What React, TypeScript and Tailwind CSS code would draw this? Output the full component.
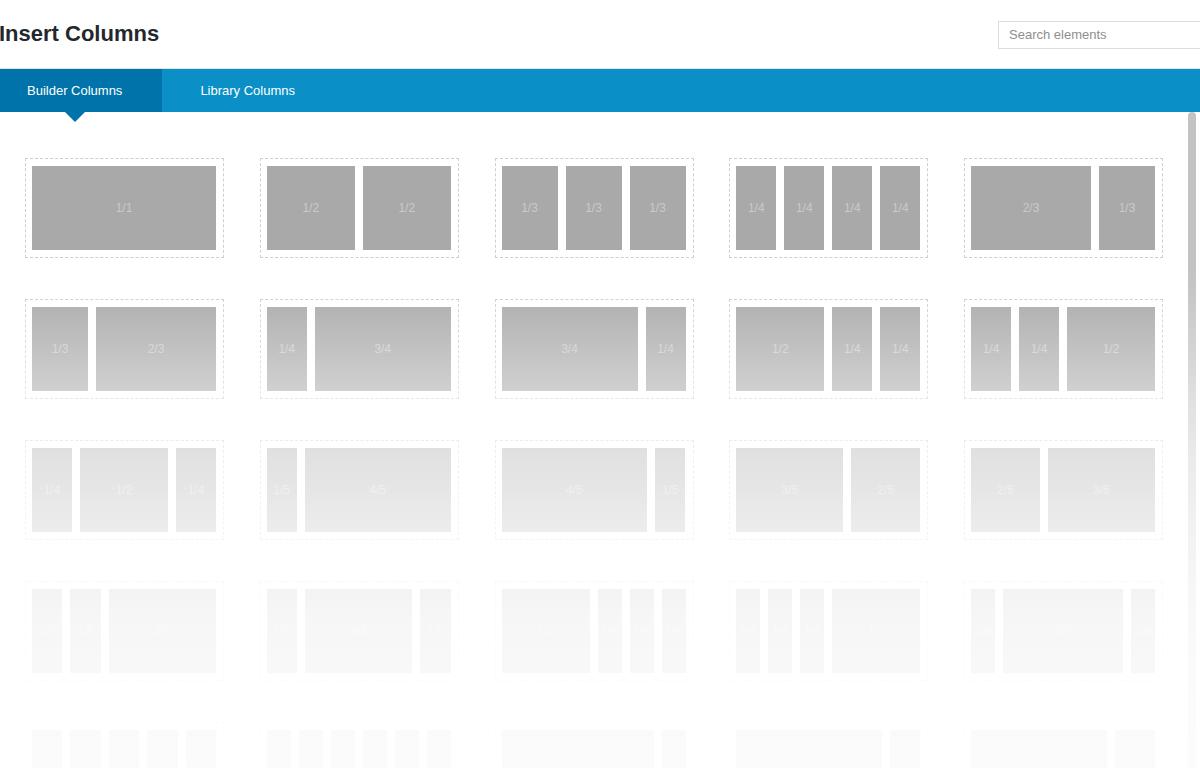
import React from "react"

type Layout = string[]

const rows: Layout[][] = [
  [["1/1"], ["1/2", "1/2"], ["1/3", "1/3", "1/3"], ["1/4", "1/4", "1/4", "1/4"], ["2/3", "1/3"]],
  [["1/3", "2/3"], ["1/4", "3/4"], ["3/4", "1/4"], ["1/2", "1/4", "1/4"], ["1/4", "1/4", "1/2"]],
  [["1/4", "1/2", "1/4"], ["1/5", "4/5"], ["4/5", "1/5"], ["3/5", "2/5"], ["2/5", "3/5"]],
  [["1/5", "1/5", "3/5"], ["1/5", "3/5", "1/5"], ["1/2", "1/6", "1/6", "1/6"], ["1/6", "1/6", "1/6", "1/2"], ["1/6", "2/3", "1/6"]],
  [["1/5", "1/5", "1/5", "1/5", "1/5"], ["1/6", "1/6", "1/6", "1/6", "1/6", "1/6"], ["5/6", "1/6"], ["4/5", "1/5"], ["3/4", "1/4"]],
]

const frac = (s: string) => {
  const [n, d] = s.split("/").map(Number)
  return n / d
}

function ColumnCard({ layout }: { layout: Layout }) {
  return (
    <div className="h-[100px] w-[199px] border border-dashed border-[#cfcfcf] py-[7px] pl-[6px] pr-[7px]">
      <div className="flex h-full mr-[-8px]">
        {layout.map((c, i) => (
          <div key={i} className="h-full pr-[8px]" style={{ width: `${frac(c) * 100}%` }}>
            <div className="flex h-full items-center justify-center bg-[#a9a9a9] text-[12px] text-[#c9c9c9]">
              {c}
            </div>
          </div>
        ))}
      </div>
    </div>
  )
}

export default function App() {
  return (
    <div
      className="relative flex h-[768px] w-full flex-col overflow-hidden bg-white"
      style={{ fontFamily: '"Liberation Sans", Arial, sans-serif' }}
    >
      <div className="flex h-[68px] shrink-0 items-center justify-between">
        <h1 className="ml-[-1px] mt-[-1px] text-[22px] font-bold text-[#23282d]">Insert Columns</h1>
        <div className="mr-[-2px] mt-[1px] flex h-[28px] w-[204px] items-center border border-[#dddddd] px-[10px] text-[13px] text-[#8e8e8e]">
          Search elements
        </div>
      </div>

      <div className="relative flex h-[44px] shrink-0 border-t border-[#e2e2e2] bg-[#0a8fc6] text-[13px] text-white">
        <div className="relative flex items-center bg-[#0073aa] pl-[27px] pr-[40px]">
          Builder Columns
          <span className="absolute left-[65px] top-full h-0 w-0 border-x-[10px] border-t-[10px] border-x-transparent border-t-[#0073aa]" />
        </div>
        <div className="flex items-center pl-[38px]">Library Columns</div>
      </div>

      <div className="flex-1 overflow-hidden pl-[25px] pt-[46px]">
        <div className="grid grid-cols-[repeat(5,199px)] gap-x-[35.75px] gap-y-[41px]">
          {rows.flat().map((layout, i) => (
            <ColumnCard key={i} layout={layout} />
          ))}
        </div>
      </div>

      <div className="absolute bottom-0 left-[1188px] top-[112px] w-[8px] rounded-t-full bg-[#c3c3c3]" />

      <div className="pointer-events-none absolute inset-x-0 bottom-0 top-[270px] bg-[linear-gradient(to_bottom,rgba(255,255,255,0)_0%,rgba(255,255,255,0.11)_7%,rgba(255,255,255,0.45)_24%,rgba(255,255,255,0.64)_36%,rgba(255,255,255,0.78)_52%,rgba(255,255,255,0.9)_70%,rgba(255,255,255,0.95)_94%)]" />
    </div>
  )
}
